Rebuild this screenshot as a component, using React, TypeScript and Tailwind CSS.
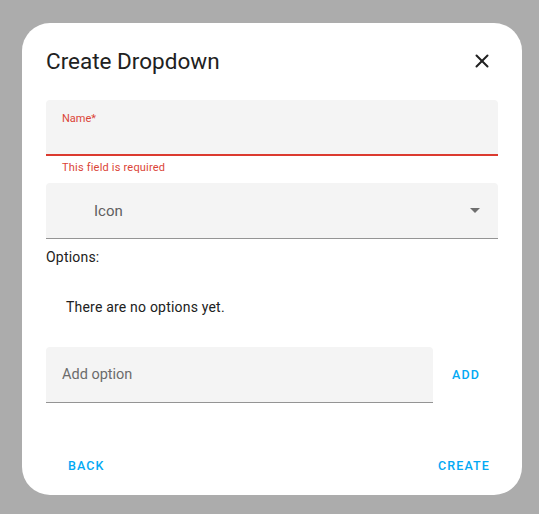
import { X } from 'lucide-react';

export default function App() {
  return (
    <div className="w-[539px] h-[514px] bg-[#acacac] pt-[23px] pl-[22px] font-['Roboto',sans-serif]">
      <div className="w-[500px] h-[472px] rounded-[28px] bg-white px-6 flex flex-col">
        <div className="mt-[14px] h-[48px] flex items-center justify-between">
          <h2 className="text-[22.5px] text-[#212121] leading-none">Create Dropdown</h2>
          <button className="w-8 h-8 flex items-center justify-center text-[#212121]">
            <X className="w-[22px] h-[22px]" strokeWidth={2.2} />
          </button>
        </div>

        <div className="mt-[15px] h-[56px] bg-[#f4f4f4] rounded-t-[4px] border-b-2 border-[#db3a2f] px-4 pt-[12px]">
          <div className="text-[11px] leading-[14px] text-[#db4437]">Name*</div>
        </div>
        <div className="px-4 pt-[5px] h-[27px] text-[11px] leading-[14px] text-[#db4437] tracking-[0.2px]">
          This field is required
        </div>

        <div className="h-[56px] bg-[#f4f4f4] rounded-t-[4px] border-b border-[#949494] flex items-center pl-12 pr-[18px]">
          <span className="text-[15px] text-[#5f5f5f] flex-1 pt-[1px]">Icon</span>
          <svg width="10" height="5" viewBox="0 0 10 5">
            <path d="M0 0 L10 0 L5 5 Z" fill="#6e6e6e" />
          </svg>
        </div>

        <div className="mt-[10px] text-[14px] leading-[16px] text-[#212121] tracking-[0.2px]">Options:</div>
        <div className="mt-[34px] pl-5 text-[14px] leading-[16px] text-[#212121] tracking-[0.2px]">There are no options yet.</div>

        <div className="mt-[32px] flex items-center">
          <div className="w-[387px] h-[56px] bg-[#f4f4f4] rounded-t-[4px] border-b border-[#949494] flex items-center px-4">
            <span className="text-[14.5px] text-[#6b6b6b] pt-[1px]">Add option</span>
          </div>
          <button className="ml-[19px] pt-[1px] text-[12.5px] font-medium tracking-[1.2px] text-[#03a9f4]">ADD</button>
        </div>

        <div className="mt-auto mb-[19px] flex items-center justify-between px-[22px]">
          <button className="text-[12.5px] font-medium tracking-[1.1px] text-[#03a9f4]">BACK</button>
          <button className="mr-[-14px] text-[12.5px] font-medium tracking-[1.1px] text-[#03a9f4]">CREATE</button>
        </div>
      </div>
    </div>
  );
}
